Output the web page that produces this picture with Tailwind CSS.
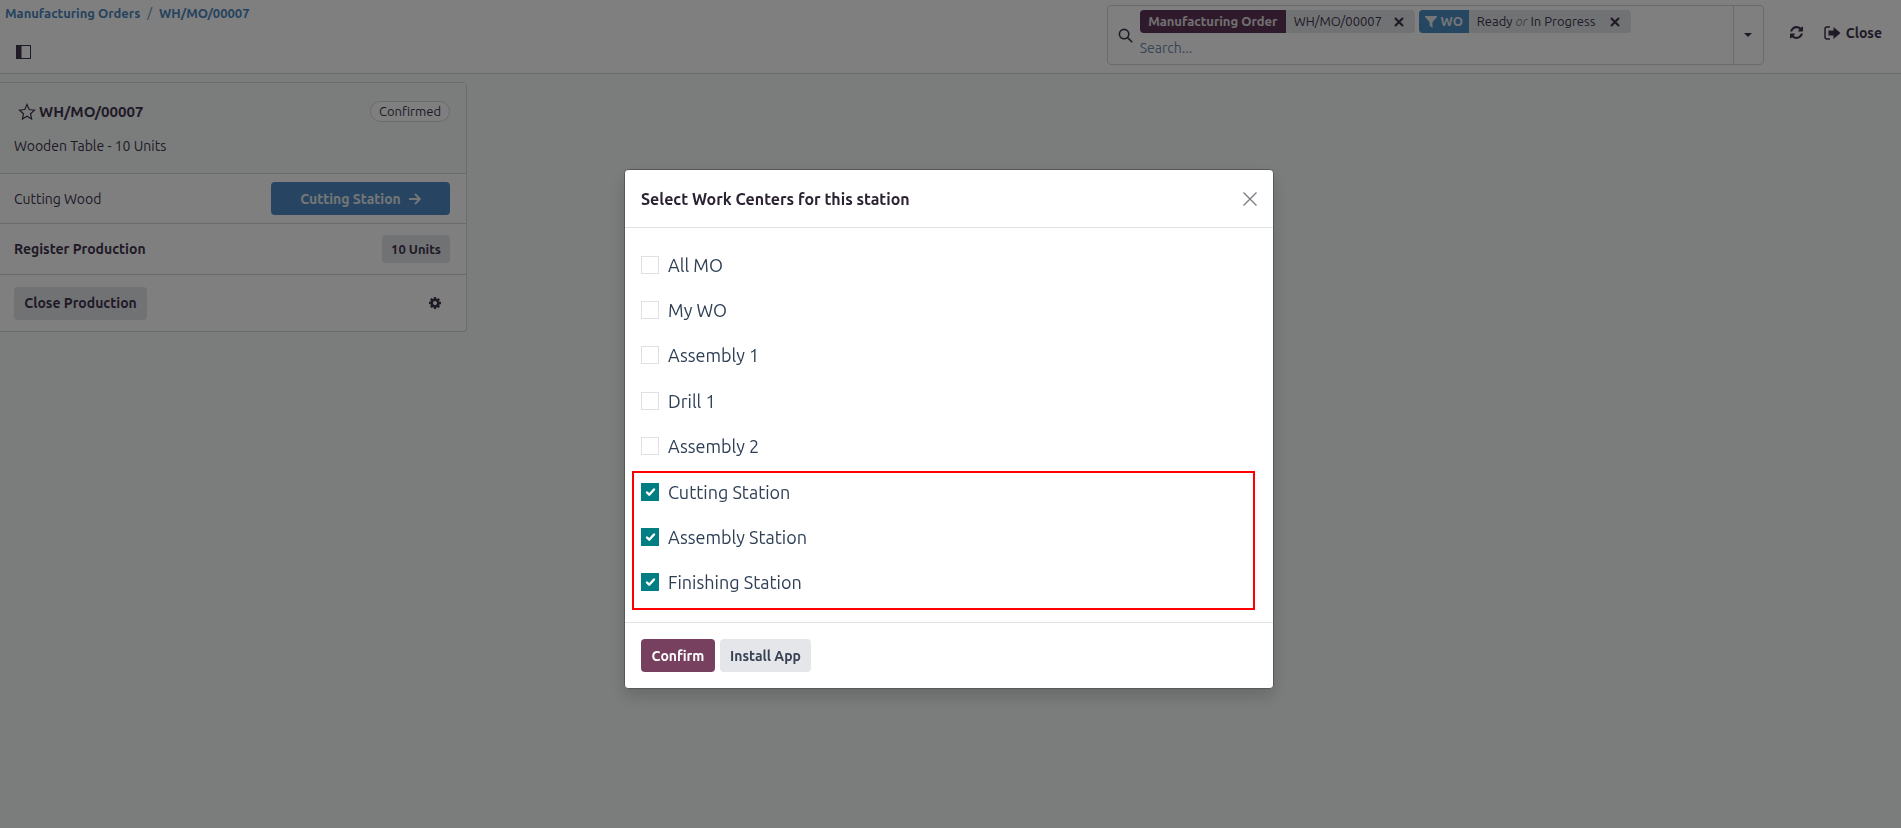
<!DOCTYPE html>
<html lang="en">
<head>
<meta charset="utf-8">
<title>WH/MO/00007</title>
<script src="https://cdn.jsdelivr.net/npm/@tailwindcss/browser@4"></script>
</head>
<body class="flex min-h-screen flex-col bg-[#f6fbf8] font-['Ubuntu','Noto_Sans',sans-serif] text-sm text-[#41344f]">
  <header class="flex min-h-[74px] items-start justify-between border-b border-[#d4d6d6] bg-white">
    <div class="flex flex-col">
      <nav aria-label="Breadcrumb" class="flex gap-[7px] px-[5px] pt-[3px] text-[13px] leading-5 font-bold text-[#4a86bd]">
        <a href="#">Manufacturing Orders</a><span class="font-normal">/</span><a href="#">WH/MO/00007</a>
      </nav>
      <button type="button" aria-label="Toggle sidebar" class="mt-[21px] ml-4 size-4">
        <svg viewBox="0 0 16 16" class="size-4" fill="currentColor"><path d="M0 1h15v14H0zM5.500 2v12H14V2z" fill-rule="evenodd"/></svg>
      </button>
    </div>
    <div class="flex items-start pt-[5px] pr-[19px]">
      <div class="flex min-h-[60px] w-[657px] rounded border border-[#d4d6d6]">
        <div class="flex flex-1 items-center gap-[7px] pl-2.5">
          <svg viewBox="0 0 16 16" class="size-[15px] shrink-0" fill="none" stroke="currentColor" stroke-width="1.7"><circle cx="6.5" cy="6.5" r="5"/><path d="M10.2 10.2l5 5"/></svg>
          <div class="flex flex-1 flex-col gap-[3px]">
            <div class="flex gap-1 text-[13px] leading-[23px]">
              <div class="flex rounded bg-[#e3e5e9]">
                <span class="w-[146px] rounded-l bg-[#5f3557] text-center font-semibold text-[#e4e0e4]">Manufacturing Order</span>
                <span class="w-[101px] pl-2">WH/MO/00007</span>
                <button type="button" aria-label="Remove Manufacturing Order" class="flex w-[28px] items-center justify-center pr-1"><svg viewBox="0 0 10 10" class="size-2.5" stroke="currentColor" stroke-width="2.2"><path d="M1 1l8 8M9 1L1 9"/></svg></button>
              </div>
              <div class="flex rounded bg-[#e3e5e9]">
                <span class="flex w-[50px] items-center justify-center gap-1 rounded-l bg-[#4a8fc4] font-semibold text-[#e8ecee]"><svg viewBox="0 0 12 12" class="size-3" fill="currentColor"><path d="M0 0h12v1L7.500 6v6L4.500 9.500V6L0 1z"/></svg>WO</span>
                <span class="w-[134px] pl-2">Ready <i class="text-[#85878f]">or</i> In Progress</span>
                <button type="button" aria-label="Remove WO filter" class="flex w-7 items-center justify-center pr-1"><svg viewBox="0 0 10 10" class="size-2.5" stroke="currentColor" stroke-width="2.2"><path d="M1 1l8 8M9 1L1 9"/></svg></button>
              </div>
            </div>
            <input type="text" aria-label="Search" placeholder="Search..." class="h-6 w-full bg-transparent text-sm outline-none placeholder:text-[#6f8bb0]">
          </div>
        </div>
        <button type="button" aria-label="Search options" class="flex w-[30px] items-center justify-center border-l border-[#d4d6d6]"><svg viewBox="0 0 8 4" class="h-1 w-2" fill="currentColor"><path d="M0 0h8L4 4z"/></svg></button>
      </div>
      <button type="button" aria-label="Refresh" class="mt-[21px] ml-[26px]">
        <svg viewBox="0 0 1536 1536" class="size-[13px]" fill="currentColor"><path d="M1511 928q0 5-1 7-64 268-268 434.500T764 1536q-146 0-282.500-55T238 1324l-129 129q-19 19-45 19t-45-19-19-45V960q0-26 19-45t45-19h448q26 0 45 19t19 45-19 45l-137 137q71 66 161 102t187 36q134 0 250-65t186-179q11-17 53-117 8-23 30-23h192q13 0 22.500 9.500t9.500 22.500zm25-800v448q0 26-19 45t-45 19h-448q-26 0-45-19t-19-45 19-45l138-138Q969 256 768 256q-134 0-250 65T332 500q-11 17-53 117-8 23-30 23H50q-13 0-22.500-9.500T18 608v-7q65-268 270-434.500T768 0q146 0 284 55.500T1297 212l130-129q19-19 45-19t45 19 19 45z"/></svg>
      </button>
      <button type="button" class="mt-[18px] ml-[21px] flex items-center gap-[5px] font-semibold">
        <svg viewBox="0 0 17 14" class="h-3.5 w-[17px]"><path d="M6 1H3a2 2 0 0 0-2 2v8a2 2 0 0 0 2 2h3" fill="none" stroke="currentColor" stroke-width="1.500"/><path d="M4.500 4.500h5V1l7 6-7 6V9.500h-5z" fill="currentColor"/></svg>
        Close
      </button>
    </div>
  </header>

  <main class="pt-2">
    <section class="w-[467px] rounded-r border border-l-0 border-[#d4d6d6] bg-white">
      <div class="flex flex-col gap-3.5 bg-[#f6fbf8] pt-[18px] pr-4 pb-[17px] pl-3.5">
        <div class="flex items-center justify-between">
          <h2 class="flex items-center gap-[3px] pl-1 text-[15px] leading-5 font-bold">
            <svg viewBox="0 0 18 18" class="size-[18px]" fill="none" stroke="currentColor" stroke-width="1.200"><path d="M9 1.500l2.200 5 5.300.600-4 3.600 1.100 5.300L9 13.300 4.400 16l1.100-5.300-4-3.600 5.300-.600z"/></svg>
            WH/MO/00007
          </h2>
          <span class="rounded-full border border-[#d4d6d6] bg-white px-2 text-[13px] leading-[19px]">Confirmed</span>
        </div>
        <p class="leading-5">Wooden Table - 10 Units</p>
      </div>
      <div class="flex min-h-[50px] items-center justify-between border-t border-[#d4d6d6] pr-4 pl-3.5">
        <span>Cutting Wood</span>
        <button type="button" class="flex h-[33px] w-[179px] items-center justify-center gap-2 rounded bg-[#4e8ac4] font-semibold text-[#e8ecee]">Cutting Station
          <svg viewBox="0 0 12 12" class="size-3" fill="none" stroke="currentColor" stroke-width="1.900"><path d="M0 6h11M6 1l5 5-5 5"/></svg></button>
      </div>
      <div class="flex min-h-[51px] items-center justify-between border-t border-[#d4d6d6] pr-4 pl-3.5 font-semibold">
        <span>Register Production</span>
        <button type="button" class="h-7 w-[68px] rounded bg-[#e3e5e9] text-[13px] font-semibold">10 Units</button>
      </div>
      <div class="flex min-h-[57px] items-center justify-between border-t border-[#d4d6d6] pr-[25px] pl-3.5">
        <button type="button" class="h-[33px] w-[133px] rounded bg-[#e3e5e9] font-semibold">Close Production</button>
        <button type="button" aria-label="Settings"><svg viewBox="0 0 1536 1536" class="size-3" fill="currentColor"><path d="M1024 768q0-106-75-181t-181-75-181 75-75 181 75 181 181 75 181-75 75-181zm512-109v222q0 12-8 23t-20 13l-185 28q-19 54-39 91 35 50 107 138 10 12 10 25t-9 23q-27 37-99 108t-94 71q-12 0-26-9l-138-108q-44 23-91 38-16 136-29 186-7 28-36 28H657q-14 0-24.500-8.500T621 1506l-28-184q-49-16-90-37l-141 107q-10 9-25 9-14 0-25-11-126-114-165-168-7-10-7-23 0-12 8-23 15-21 51-66.500t54-70.500q-27-50-41-99L29 913q-13-2-21-12.500T0 877V655q0-12 8-23t19-13l186-28q14-46 39-92-40-57-107-138-10-12-10-24 0-10 9-23 26-36 98.500-107.500T337 135q13 0 26 10l138 107q44-23 91-38 16-136 29-186 7-28 36-28h222q14 0 24.500 8.500T915 30l28 184q49 16 90 37l142-107q9-9 24-9 13 0 25 10 129 119 165 170 7 8 7 22 0 12-8 23-15 21-51 66.500t-54 70.500q26 50 41 98l183 28q13 2 21 12.500t8 23.500z"/></svg></button>
      </div>
    </section>
  </main>

  <div class="fixed inset-0 flex items-start justify-center bg-black/50 pt-[169px] pr-[3px]">
    <div role="dialog" aria-modal="true" aria-labelledby="dialog-title" class="relative w-[650px] rounded border border-[#57585c] bg-white text-[#374151] shadow-[0_8px_16px_rgba(0,0,0,0.15)]">
      <div class="flex min-h-[58px] items-center justify-between border-b border-[#dee1e5] px-4">
        <h1 id="dialog-title" class="text-base font-semibold text-[#2b2232]">Select Work Centers for this station</h1>
        <button type="button" aria-label="Close dialog"><svg viewBox="0 0 14 14" class="size-3.5" stroke="#7b7d84" stroke-width="1.400"><path d="M.500.500l13 13M13.500.500l-13 13"/></svg></button>
      </div>
      <div class="grid min-h-[394px] auto-rows-fr px-4 pt-3.5 pb-[17px] text-lg text-[#2f4056]">
        <label class="flex items-center gap-[9px]"><input type="checkbox" class="size-[18px] appearance-none border border-[#dee0e6]">All MO</label>
        <label class="flex items-center gap-[9px]"><input type="checkbox" class="size-[18px] appearance-none border border-[#dee0e6]">My WO</label>
        <label class="flex items-center gap-[9px]"><input type="checkbox" class="size-[18px] appearance-none border border-[#dee0e6]">Assembly 1</label>
        <label class="flex items-center gap-[9px]"><input type="checkbox" class="size-[18px] appearance-none border border-[#dee0e6]">Drill 1</label>
        <label class="flex items-center gap-[9px]"><input type="checkbox" class="size-[18px] appearance-none border border-[#dee0e6]">Assembly 2</label>
        <label class="flex items-center gap-[9px]"><span class="grid size-[18px]"><input type="checkbox" checked class="col-start-1 row-start-1 size-[18px] appearance-none bg-[#017e84]"><svg viewBox="0 0 18 18" class="pointer-events-none col-start-1 row-start-1" fill="none" stroke="#fff" stroke-width="2.400" stroke-linecap="round" stroke-linejoin="round"><path d="M6 9.500l2.200 2.200L13 6.500"/></svg></span>Cutting Station</label>
        <label class="flex items-center gap-[9px]"><span class="grid size-[18px]"><input type="checkbox" checked class="col-start-1 row-start-1 size-[18px] appearance-none bg-[#017e84]"><svg viewBox="0 0 18 18" class="pointer-events-none col-start-1 row-start-1" fill="none" stroke="#fff" stroke-width="2.400" stroke-linecap="round" stroke-linejoin="round"><path d="M6 9.500l2.200 2.200L13 6.500"/></svg></span>Assembly Station</label>
        <label class="flex items-center gap-[9px]"><span class="grid size-[18px]"><input type="checkbox" checked class="col-start-1 row-start-1 size-[18px] appearance-none bg-[#017e84]"><svg viewBox="0 0 18 18" class="pointer-events-none col-start-1 row-start-1" fill="none" stroke="#fff" stroke-width="2.400" stroke-linecap="round" stroke-linejoin="round"><path d="M6 9.500l2.200 2.200L13 6.500"/></svg></span>Finishing Station</label>
      </div>
      <div class="flex min-h-[66px] items-center gap-[5px] border-t border-[#dee1e5] px-4">
        <button type="button" class="h-[33px] w-[74px] rounded bg-[#77405f] font-semibold text-white">Confirm</button>
        <button type="button" class="h-[33px] w-[91px] rounded bg-[#e4e6ea] font-semibold">Install App</button>
      </div>
      <div class="pointer-events-none absolute top-[301px] right-[18px] left-[7px] h-[139px] border-2 border-[#ff0000]"></div>
    </div>
  </div>
</body>
</html>
